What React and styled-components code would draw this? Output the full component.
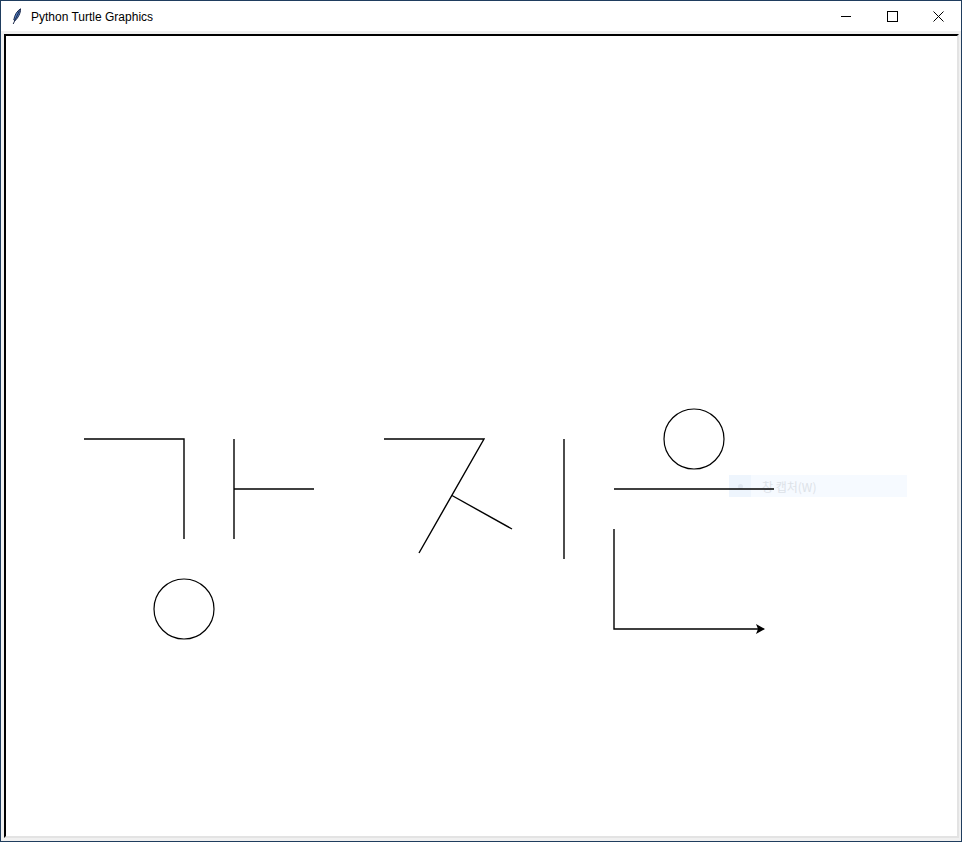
import React from 'react';
import styled, { createGlobalStyle } from 'styled-components';

const GlobalStyle = createGlobalStyle`
  html, body {
    margin: 0;
    padding: 0;
    background: #1b3a5a;
  }
`;

const Window = styled.div`
  width: 962px;
  height: 842px;
  box-sizing: border-box;
  border: 1px solid #1f3d5e;
  display: flex;
  flex-direction: column;
  background: #f0f0f0;
  font-family: 'Liberation Sans', 'Noto Sans', 'Noto Sans CJK KR', sans-serif;
`;

const TitleBar = styled.div`
  height: 30px;
  flex: none;
  display: flex;
  align-items: center;
  background: #ffffff;
`;

const AppIcon = styled.div`
  width: 30px;
  height: 30px;
  display: flex;
  align-items: center;
  justify-content: center;
  margin-left: 1px;
`;

const Title = styled.span`
  font-size: 12px;
  color: #000;
  margin-left: -1px;
  margin-top: 1px;
  flex: 1;
`;

const Controls = styled.div`
  display: flex;
  height: 100%;
`;

const ControlButton = styled.div`
  width: 46px;
  height: 100%;
  display: flex;
  align-items: center;
  justify-content: center;
`;

const Body = styled.div`
  flex: 1;
  padding: 3px 2px 3px 3px;
  display: flex;
`;

const Canvas = styled.div`
  position: relative;
  flex: 1;
  background: #fff;
  border-style: solid;
  border-width: 2px;
  border-color: #000 #e3e3e3 #e3e3e3 #000;
  overflow: hidden;
`;

const Drawing = styled.svg`
  position: absolute;
  left: 0;
  top: 0;
  z-index: 2;
`;

const Tooltip = styled.div`
  position: absolute;
  left: 723px;
  top: 439px;
  width: 178px;
  height: 22px;
  display: flex;
  align-items: center;
  background: #f6faff;
  z-index: 1;
`;

const TooltipIcon = styled.div`
  width: 22px;
  height: 100%;
  display: flex;
  align-items: center;
  justify-content: center;
  background: #eef5fd;
`;

const Dot = styled.span`
  width: 5px;
  height: 5px;
  border-radius: 50%;
  background: #dfe7f1;
`;

const TooltipText = styled.span`
  margin-left: 11px;
  font-size: 12px;
  color: #dde2e8;
  font-family: 'Noto Sans CJK KR', 'Noto Sans', sans-serif;
`;

const Feather = () => (
  <svg width="10" height="17" viewBox="0 0 10 17">
    <path d="M8.5 0.8 C5 3 2.5 7 1.8 12 L3 12.8 C6 10 8.8 5 8.5 0.8 Z" fill="#4f7fc8" stroke="#1d2a4a" strokeWidth="1" />
    <path d="M7.5 2.5 L1.2 16" stroke="#1d2a4a" strokeWidth="1" />
  </svg>
);

const Minimize = () => (
  <svg width="11" height="11" viewBox="0 0 11 11">
    <path d="M0 5.5 H10" stroke="#000" strokeWidth="1" />
  </svg>
);

const Maximize = () => (
  <svg width="11" height="11" viewBox="0 0 11 11">
    <rect x="0.5" y="0.5" width="10" height="10" fill="none" stroke="#000" strokeWidth="1" />
  </svg>
);

const Close = () => (
  <svg width="11" height="11" viewBox="0 0 11 11">
    <path d="M0.5 0.5 L10.5 10.5 M10.5 0.5 L0.5 10.5" stroke="#000" strokeWidth="1" />
  </svg>
);

const lines = [
  // ㄱ
  'M84 439 H184 V539',
  // ㅏ
  'M234 439 V539',
  'M234 489 H314',
  // ㅈ
  'M384 439 H484 L419 553',
  'M452 495.5 L512 529',
  // ㅣ
  'M564 439 V559',
  // ㅡ
  'M614 489 H774',
  // ㄴ
  'M614 529 V629 H758',
];

const circles = [
  { cx: 184, cy: 609, r: 30 },
  { cx: 694, cy: 439, r: 30 },
];

function App() {
  return (
    <>
      <GlobalStyle />
      <Window>
        <TitleBar>
          <AppIcon>
            <Feather />
          </AppIcon>
          <Title>Python Turtle Graphics</Title>
          <Controls>
            <ControlButton>
              <Minimize />
            </ControlButton>
            <ControlButton>
              <Maximize />
            </ControlButton>
            <ControlButton>
              <Close />
            </ControlButton>
          </Controls>
        </TitleBar>
        <Body>
          <Canvas>
            <Tooltip>
              <TooltipIcon>
                <Dot />
              </TooltipIcon>
              <TooltipText>창 캡처(W)</TooltipText>
            </Tooltip>
            <Drawing width="950" height="800" viewBox="6 36 950 800">
              <g fill="none" stroke="#000" strokeWidth="1.4" strokeLinecap="butt">
                {lines.map((d) => (
                  <path key={d} d={d} />
                ))}
                {circles.map((c) => (
                  <circle key={c.cx} cx={c.cx} cy={c.cy} r={c.r} strokeWidth="1.2" />
                ))}
              </g>
              <polygon points="765,629 756,624 758,629 756,634" fill="#000" />
            </Drawing>
          </Canvas>
        </Body>
      </Window>
    </>
  );
}

export default App;
